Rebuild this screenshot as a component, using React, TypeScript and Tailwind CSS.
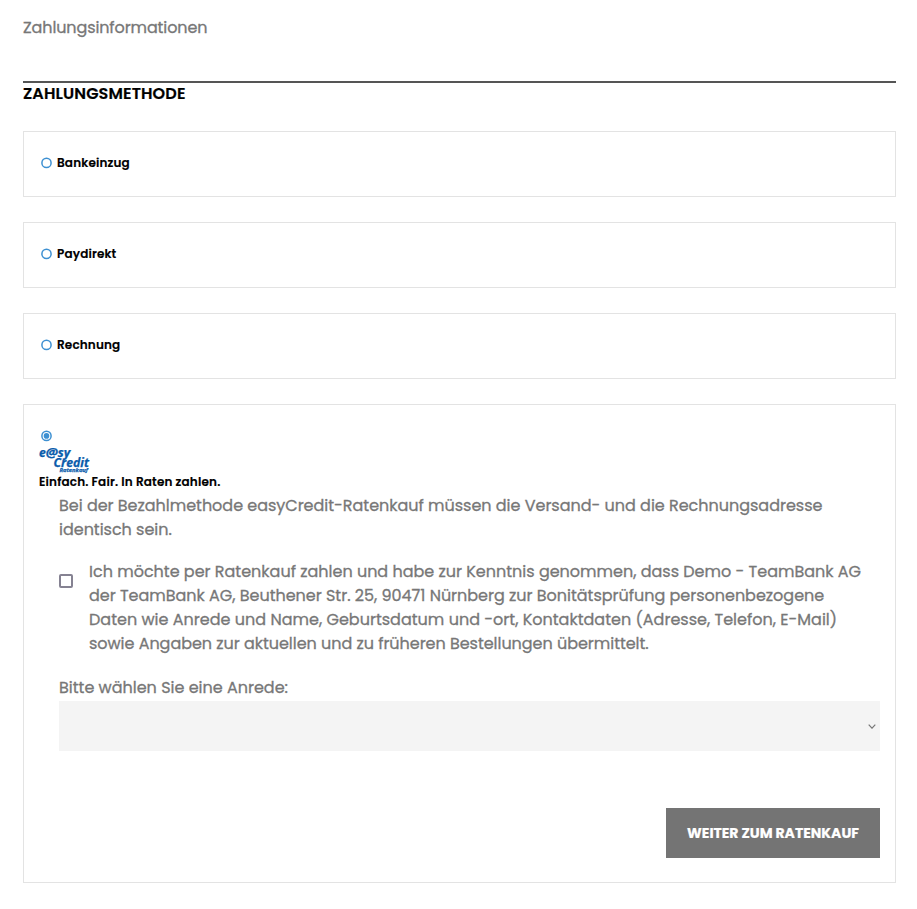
function Radio({ checked = false }: { checked?: boolean }) {
  return (
    <svg className="block h-[12px] w-[11px] shrink-0" viewBox="0 0 11 12" fill="none">
      <circle cx="5.5" cy="5.9" r="4.6" stroke="#3d90d2" strokeWidth="1.5" />
      {checked && <circle cx="5.5" cy="5.9" r="2.8" fill="#3d90d2" />}
    </svg>
  );
}

function Option({ label }: { label: string }) {
  return (
    <div className="mb-[25px] flex h-[66px] items-start gap-[5px] border border-[#e3e3e3] pt-[22px] pl-[17px]">
      <span className="pt-[3px]"><Radio /></span>
      <span className="text-[12px] leading-[18px] font-semibold tracking-[0.15px] text-black [-webkit-text-stroke:0.15px]">{label}</span>
    </div>
  );
}

function Logo() {
  return (
    <svg
      className="block h-[28px] w-[52px] overflow-visible"
      viewBox="0 0 52 28"
      fontFamily="'Open Sans', 'Noto Sans', sans-serif"
      fontWeight="700"
      fontStyle="italic"
      fill="#0a5cab"
      stroke="#0a5cab"
      strokeWidth="0.25"
    >
      <text x="0" y="11.3" fontSize="11.5" textLength="6.8" lengthAdjust="spacingAndGlyphs">e</text>
      <text x="6.8" y="10.6" fontSize="11.5" textLength="12" lengthAdjust="spacingAndGlyphs">@</text>
      <text x="18.8" y="11.3" fontSize="11.5" textLength="12.5" lengthAdjust="spacingAndGlyphs">sy</text>
      <text x="14.5" y="20.5" fontSize="11.5" textLength="35.5" lengthAdjust="spacingAndGlyphs">Credit</text>
      <text x="20.5" y="26.3" fontSize="5.4" textLength="28.5" lengthAdjust="spacingAndGlyphs">Ratenkauf</text>
    </svg>
  );
}

export default function App() {
  return (
    <main className="h-[909px] w-[917px] bg-white pt-[16px] pr-[21px] pl-[23px] font-['Poppins','Inter',sans-serif] text-[16px] leading-6 text-[#777777]">
      <h1 className="h-[65px] tracking-[-0.11px] [-webkit-text-stroke:0.3px]">Zahlungsinformationen</h1>
      <h2 className="mb-[25px] h-[25px] border-t-2 border-[#555555] text-[16px] leading-[21px] font-semibold tracking-[0.13px] text-black [-webkit-text-stroke:0.2px]">
        ZAHLUNGSMETHODE
      </h2>
      <Option label="Bankeinzug" />
      <Option label="Paydirekt" />
      <Option label="Rechnung" />
      <section className="h-[479px] border border-[#e3e3e3] pt-[25px] pr-[15px] pl-[15px]">
        <div className="h-[16px] pl-[2px]"><Radio checked /></div>
        <Logo />
        <p className="-mt-[1px] h-[21px] text-[12px] leading-[18px] font-semibold tracking-[0.17px] whitespace-nowrap text-black [-webkit-text-stroke:0.15px]">
          Einfach. Fair. In Raten zahlen.
        </p>
        <div className="pl-[20px] whitespace-nowrap">
          <div className="[-webkit-text-stroke:0.3px]">
            <p className="tracking-[-0.015px]">
              <span className="block">Bei der Bezahlmethode easyCredit-Ratenkauf müssen die Versand- und die Rechnungsadresse</span>
              <span className="block">identisch sein.</span>
            </p>
            <label className="mt-[18px] flex">
              <span className="mt-[14px] mr-[16px] h-[14px] w-[14px] shrink-0 rounded-[2px] border-2 border-[#858292] bg-white" />
              <span>
                <span className="block">Ich möchte per Ratenkauf zahlen und habe zur Kenntnis genommen, dass Demo - TeamBank AG</span>
                <span className="block tracking-[-0.01px]">der TeamBank AG, Beuthener Str. 25, 90471 Nürnberg zur Bonitätsprüfung personenbezogene</span>
                <span className="block tracking-[0.015px]">Daten wie Anrede und Name, Geburtsdatum und -ort, Kontaktdaten (Adresse, Telefon, E-Mail)</span>
                <span className="block tracking-[-0.03px]">sowie Angaben zur aktuellen und zu früheren Bestellungen übermittelt.</span>
              </span>
            </label>
            <p className="mt-[20px]">Bitte wählen Sie eine Anrede:</p>
          </div>
          <div className="mt-[1px] flex h-[50px] items-center justify-end bg-[#f4f4f4] pr-[4px]">
            <svg className="h-[5px] w-[8px]" viewBox="0 0 8 5" fill="none">
              <path d="M.7 .7 4 4.2 7.3 .7" stroke="#777" strokeWidth="1.2" />
            </svg>
          </div>
          <div className="mt-[57px] flex justify-end">
            <button className="h-[50px] w-[214px] bg-[#747474] text-[14px] font-bold text-white [-webkit-text-stroke:0.2px]">WEITER ZUM RATENKAUF</button>
          </div>
        </div>
      </section>
    </main>
  );
}
